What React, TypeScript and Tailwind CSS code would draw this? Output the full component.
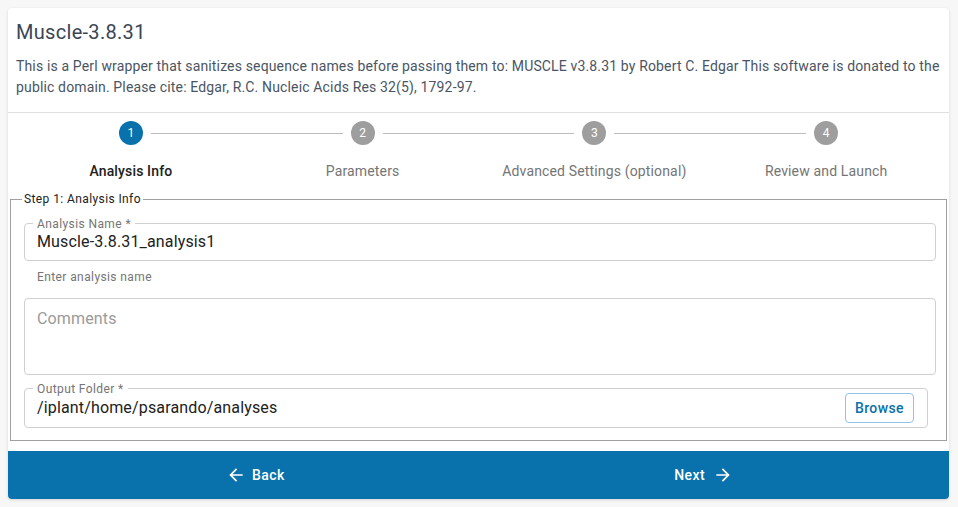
import { MdArrowBack, MdArrowForward } from 'react-icons/md';

const steps = ['Analysis Info', 'Parameters', 'Advanced Settings (optional)', 'Review and Launch'];

function Step({ index, label, active }: { index: number; label: string; active: boolean }) {
  return (
    <div className="relative flex flex-col items-center">
      {index > 0 && (
        <div className="absolute top-[12px] left-[calc(-50%+20px)] right-[calc(50%+20px)] border-t border-[#bdbdbd]" />
      )}
      <div
        className={`flex h-6 w-6 items-center justify-center rounded-full text-xs text-white ${
          active ? 'bg-[#0971ab]' : 'bg-[#9e9e9e]'
        }`}
      >
        {index + 1}
      </div>
      <div
        className={`mt-4 text-sm leading-5 tracking-[0.15px] ${active ? 'font-medium text-[#212121]' : 'text-[#757575]'}`}
      >
        {label}
      </div>
    </div>
  );
}

function Outlined({ label, children, className = '' }: { label?: string; children: React.ReactNode; className?: string }) {
  return (
    <div className={`relative rounded-[4px] border border-[#d0d0d0] ${className}`}>
      {label && (
        <span className="absolute -top-[8px] left-[8px] bg-white px-[4px] text-xs leading-4 tracking-[0.4px] text-[#757575]">
          {label}
        </span>
      )}
      {children}
    </div>
  );
}

export default function App() {
  return (
    <div className="min-h-[507px] bg-[#f7f7f7] pt-2 pl-2 font-['Roboto',sans-serif]">
      <div className="w-[941px] overflow-hidden rounded-[4px] bg-white shadow-[0_1px_3px_rgba(0,0,0,0.14)]">
        <div className="border-b border-[#e0e0e0] px-2 pt-[10px] pb-[14px]">
          <h1 className="text-[20px] leading-7 font-normal tracking-[0.3px] text-[#3a4654]">Muscle-3.8.31</h1>
          <p className="mt-[10px] text-sm leading-[21px] tracking-[0.15px] text-[#4a5563]">
            This is a Perl wrapper that sanitizes sequence names before passing them to: MUSCLE v3.8.31 by Robert C. Edgar This software is donated to the public domain. Please cite: Edgar, R.C. Nucleic Acids Res 32(5), 1792-97.
          </p>
        </div>

        <div className="grid grid-cols-4 px-[7px] pt-2">
          {steps.map((s, i) => (
            <Step key={s} index={i} label={s} active={i === 0} />
          ))}
        </div>

        <fieldset className="mx-[2px] mt-[10px] border border-[#a0a0a0] pr-[10px] pb-3 pl-[13px]">
          <legend className="-ml-[2px] px-[2px] text-xs leading-4 tracking-[0.4px] text-[#212121]">Step 1: Analysis Info</legend>

          <Outlined label="Analysis Name *" className="mt-4 h-[38px]">
            <div className="flex h-full items-center px-3 text-base tracking-[0.15px] text-[#212121]">Muscle-3.8.31_analysis1</div>
          </Outlined>
          <div className="mt-2 pl-[13px] text-xs leading-4 tracking-[0.4px] text-[#757575]">Enter analysis name</div>

          <Outlined className="mt-[13px] h-[77px]">
            <div className="px-3 pt-[10px] text-base leading-[19px] tracking-[0.15px] text-[#9a9a9a]">Comments</div>
          </Outlined>

          <Outlined label="Output Folder *" className="mt-[13px] mr-2 h-[40px]">
            <div className="flex h-full items-center justify-between pr-[13px] pl-3">
              <span className="text-base tracking-[0.15px] text-[#212121]">/iplant/home/psarando/analyses</span>
              <button className="h-[30px] rounded-[4px] border border-[#8fc2e4] px-[9px] text-sm font-medium tracking-[0.4px] text-[#0971ab]">
                Browse
              </button>
            </div>
          </Outlined>
        </fieldset>

        <div className="mt-[10px] flex h-12 items-center justify-between bg-[#0971ab] pr-[216px] pl-[218px] text-sm font-medium tracking-[0.4px] text-white">
          <button className="flex items-center gap-[6px]">
            <MdArrowBack size={20} />
            <span>Back</span>
          </button>
          <button className="flex items-center gap-2">
            <span>Next</span>
            <MdArrowForward size={20} />
          </button>
        </div>
      </div>
    </div>
  );
}
